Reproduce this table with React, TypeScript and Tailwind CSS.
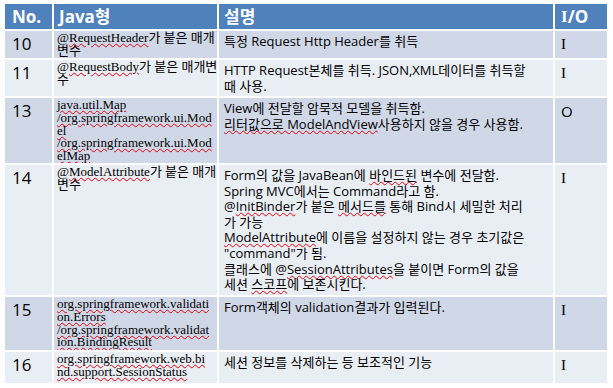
import React from "react";

const SANS = "font-['Open_Sans','Noto_Sans_CJK_KR',sans-serif]";
const SERIF = "font-['Liberation_Serif','Noto_Sans_CJK_KR',serif]";

// red squiggle like the spell checker draws
function Sq({ children }: { children: React.ReactNode }) {
  return (
    <span className="underline decoration-wavy decoration-red-600 decoration-1 underline-offset-[1px]">
      {children}
    </span>
  );
}

type Row = {
  no: string;
  io: "I" | "O";
  java: React.ReactNode[];
  desc: React.ReactNode[];
  dark: boolean;
};

const rows: Row[] = [
  {
    no: "10",
    io: "I",
    dark: true,
    java: [<>@<Sq>RequestHeader</Sq>가 붙은 매개</>, "변수"],
    desc: ["특정 Request Http Header를 취득"],
  },
  {
    no: "11",
    io: "I",
    dark: false,
    java: [<>@<Sq>RequestBody</Sq>가 붙은 매개변</>, "수"],
    desc: ["HTTP Request본체를 취득. JSON,XML데이터를 취득할", "때 사용."],
  },
  {
    no: "13",
    io: "O",
    dark: true,
    java: [
      <Sq>java.util.Map</Sq>,
      <Sq>/org.springframework.ui.Mod</Sq>,
      <Sq>el</Sq>,
      <Sq>/org.springframework.ui.Mod</Sq>,
      <Sq>elMap</Sq>,
    ],
    desc: [
      "View에 전달할 암묵적 모델을 취득함.",
      <><Sq>리터값으로 ModelAndView</Sq>사용하지 않을 경우 사용함.</>,
    ],
  },
  {
    no: "14",
    io: "I",
    dark: false,
    java: [<>@<Sq>ModelAttribute</Sq>가 붙은 매개</>, "변수"],
    desc: [
      <>Form의 값을 JavaBean에 <Sq>바인드된</Sq> 변수에 전달함.</>,
      "Spring MVC에서는 Command라고 함.",
      <>@<Sq>InitBinder</Sq>가 붙은 <Sq>메서드를</Sq> 통해 Bind시 세밀한 처리</>,
      "가 가능",
      <><Sq>ModelAttribute</Sq>에 이름을 설정하지 않는 경우 초기값은</>,
      "\"command\"가 됨.",
      <>클래스에 @<Sq>SessionAttributes</Sq>을 붙이면 Form의 값을</>,
      <>세션 <Sq>스코프</Sq>에 보존시킨다.</>,
    ],
  },
  {
    no: "15",
    io: "I",
    dark: true,
    java: [
      <Sq>org.springframework.validati</Sq>,
      <Sq>on.Errors</Sq>,
      <Sq>/org.springframework.validat</Sq>,
      <Sq>ion.BindingResult</Sq>,
    ],
    desc: ["Form객체의 validation결과가 입력된다."],
  },
  {
    no: "16",
    io: "I",
    dark: false,
    java: [<Sq>org.springframework.web.bi</Sq>, <Sq>nd.support.SessionStatus</Sq>],
    desc: ["세션 정보를 삭제하는 등 보조적인 기능"],
  },
];

export default function App() {
  return (
    <div className="w-[613px] h-[388px] bg-white pl-[5px] pt-[4px]">
      <div className="grid grid-cols-[47px_163px_334px_52px] grid-rows-[25px_27px_36px_65px_130px_53px_31px] gap-[2px] text-black">
        {/* header */}
        <div className={`bg-[#4F81BD] text-white font-bold text-[17px] flex items-center pl-[7px] ${SANS}`}>No.</div>
        <div className={`bg-[#4F81BD] text-white font-bold text-[17px] flex items-center pl-[5px] ${SANS}`}>Java형</div>
        <div className={`bg-[#4F81BD] text-white font-bold text-[17px] flex items-center pl-[5px] ${SANS}`}>설명</div>
        <div className={`bg-[#4F81BD] text-white font-bold text-[17px] flex items-center pl-[6px] ${SANS}`}>
          <span className={SERIF}>I</span>/O
        </div>

        {rows.map((r) => {
          const bg = r.dark ? "bg-[#D0D8E8]" : "bg-[#E9EDF4]";
          return (
            <React.Fragment key={r.no}>
              <div className={`${bg} pl-[7px] text-[17px] leading-[26px] ${SANS}`}>{r.no}</div>
              <div className={`${bg} pl-[3px] pt-[1px] text-[13px] leading-[12.8px] whitespace-nowrap overflow-hidden ${SERIF}`}>
                {r.java.map((l, i) => (
                  <div key={i}>{l}</div>
                ))}
              </div>
              <div className={`${bg} pl-[5px] pt-[3px] text-[13px] leading-[15.6px] whitespace-nowrap overflow-hidden ${SANS}`}>
                {r.desc.map((l, i) => (
                  <div key={i}>{l}</div>
                ))}
              </div>
              <div
                className={`${bg} pl-[6px] text-[15px] leading-[26px] ${r.io === "I" ? SERIF : SANS}`}
              >
                {r.io}
              </div>
            </React.Fragment>
          );
        })}
      </div>
    </div>
  );
}
